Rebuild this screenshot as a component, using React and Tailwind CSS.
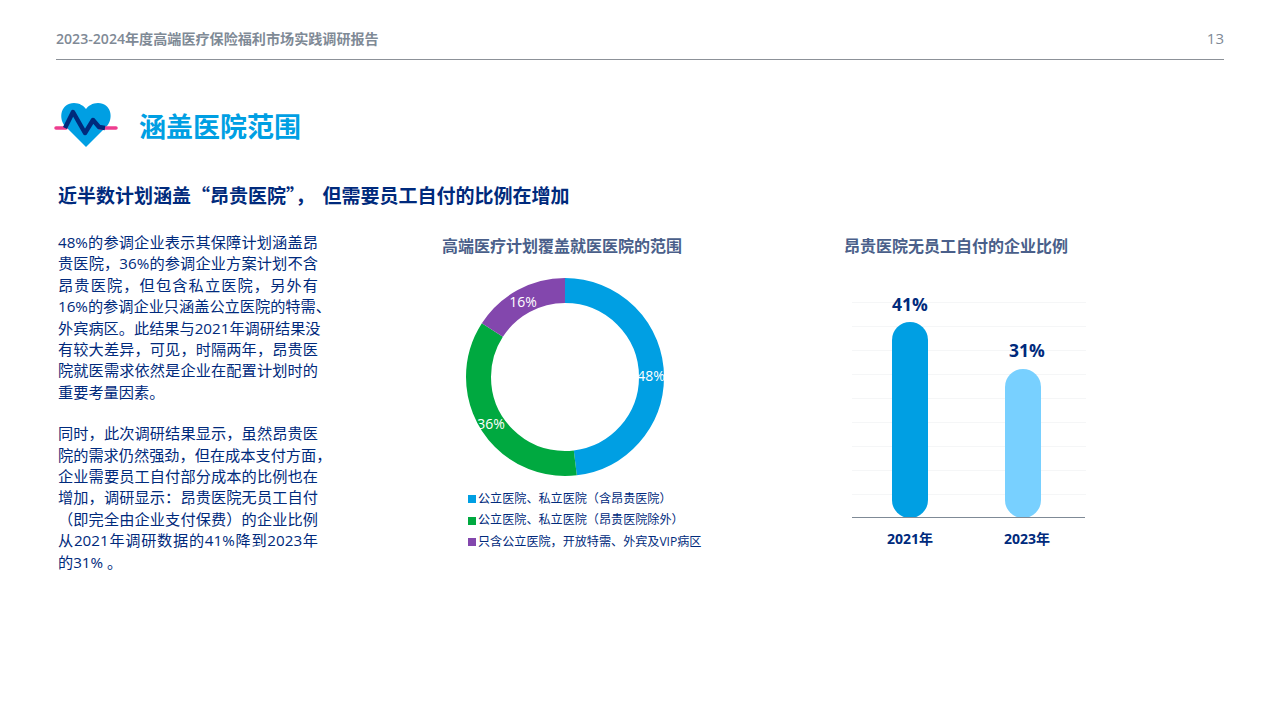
const font = { fontFamily: '"Open Sans", "Noto Sans CJK SC", sans-serif' }

const para1 = [
  '48%的参调企业表示其保障计划涵盖昂',
  '贵医院，36%的参调企业方案计划不含',
  '昂贵医院，但包含私立医院，另外有',
  '16%的参调企业只涵盖公立医院的特需、',
  '外宾病区。此结果与2021年调研结果没',
  '有较大差异，可见，时隔两年，昂贵医',
  '院就医需求依然是企业在配置计划时的',
  '重要考量因素。',
]

const para2 = [
  '同时，此次调研结果显示，虽然昂贵医',
  '院的需求仍然强劲，但在成本支付方面，',
  '企业需要员工自付部分成本的比例也在',
  '增加，调研显示：昂贵医院无员工自付',
  '（即完全由企业支付保费）的企业比例',
  '从2021年调研数据的41%降到2023年',
  '的31% 。',
]

const legend = [
  { color: 'bg-[#009fe3]', label: '公立医院、私立医院（含昂贵医院）' },
  { color: 'bg-[#00a940]', label: '公立医院、私立医院（昂贵医院除外）' },
  { color: 'bg-[#8347ad]', label: '只含公立医院，开放特需、外宾及VIP病区' },
]

function HeartIcon() {
  return (
    <svg width="64" height="48" viewBox="0 0 64 48">
      <path d="M32 45 L11 24 C4 16 7 1 20 1 C25.500 1 30 4 32 7 C34 4 38.500 1 44 1 C57 1 60 16 53 24 Z" fill="#009fe3" />
      <path d="M2 26 H12 M46 26 H62" stroke="#ee3d8f" strokeWidth="3.500" strokeLinecap="round" fill="none" />
      <path d="M11 26 L19 10 L31 31 L39 18 L45 25 L51 26" stroke="#002a7c" strokeWidth="4.500" strokeLinejoin="round" fill="none" />
    </svg>
  )
}

function Donut() {
  const r = 86.5
  const c = 2 * Math.PI * r
  const parts = [
    { pct: 48, color: '#009fe3' },
    { pct: 36, color: '#00a940' },
    { pct: 16, color: '#8347ad' },
  ]
  let offset = 0
  return (
    <svg width="210" height="200" viewBox="0 0 210 200" style={font}>
      {parts.map((p) => {
        const len = (p.pct / 100) * c
        const el = (
          <circle
            key={p.pct}
            cx="105"
            cy="100"
            r={r}
            fill="none"
            stroke={p.color}
            strokeWidth="25"
            strokeDasharray={`${len} ${c - len}`}
            strokeDashoffset={-offset}
            transform="rotate(-90 105 100)"
          />
        )
        offset += len
        return el
      })}
      <text x="191" y="100" textAnchor="middle" dominantBaseline="middle" fontSize="14" fill="#fff">48%</text>
      <text x="31" y="148" textAnchor="middle" dominantBaseline="middle" fontSize="14" fill="#fff">36%</text>
      <text x="63" y="26" textAnchor="middle" dominantBaseline="middle" fontSize="14" fill="#fff">16%</text>
    </svg>
  )
}

function BarChart() {
  const grid = [0, 24, 48, 72, 96, 120, 144, 168, 192]
  return (
    <svg width="236" height="258" viewBox="0 0 236 258" style={font}>
      {grid.map((y) => (
        <line key={y} x1="2" x2="236" y1={y + 10.500} y2={y + 10.500} stroke="#f5f6f7" />
      ))}
      <rect x="42" y="30" width="36" height="196" rx="18" fill="#009fe3" />
      <rect x="155" y="77" width="36" height="149" rx="18" fill="#78d0ff" />
      <line x1="2" x2="235" y1="225.500" y2="225.500" stroke="#7f8a96" />
      <text x="60" y="19" textAnchor="middle" fontSize="17.500" fontWeight="700" fill="#002a7c">41%</text>
      <text x="177" y="65" textAnchor="middle" fontSize="17.500" fontWeight="700" fill="#002a7c">31%</text>
      <text x="60" y="252" textAnchor="middle" fontSize="14" fontWeight="700" fill="#002a7c">2021年</text>
      <text x="177" y="252" textAnchor="middle" fontSize="14" fontWeight="700" fill="#002a7c">2023年</text>
    </svg>
  )
}

function Para({ lines }) {
  return lines.map((l, i) => (
    <div
      key={l}
      className={i === lines.length - 1 ? 'w-[260px] whitespace-nowrap' : 'w-[260px] whitespace-nowrap text-justify [text-align-last:justify]'}
    >
      {l}
    </div>
  ))
}

export default function App() {
  return (
    <div className="w-[1280px] h-[720px] bg-white overflow-hidden px-14 pt-[28px]" style={font}>

      {/* Header */}
      <div className="flex items-center justify-between h-[32px] border-b border-[#8c9198] pb-[10px]">
        <span className="text-[14.100px] font-semibold text-[#7f8a96]">2023-2024年度高端医疗保险福利市场实践调研报告</span>
        <span className="text-[15px] text-[#7f8a96]">13</span>
      </div>

      {/* Title */}
      <div className="flex items-center mt-[41px] -ml-[2px] h-[50px]">
        <HeartIcon />
        <h1 className="ml-[21px] text-[27px] font-bold text-[#009fe3] leading-none">涵盖医院范围</h1>
      </div>

      <h2 className="mt-[29px] ml-[2px] text-[19px] leading-[30px] font-bold text-[#002a7c]">
        近半数计划涵盖<span style={{ fontFamily: '"Noto Sans CJK SC", sans-serif' }}>“</span>昂贵医院<span style={{ fontFamily: '"Noto Sans CJK SC", sans-serif' }}>”</span>， <span className="ml-[3px]">但需要员工自付的比例在增加</span>
      </h2>

      <div className="flex mt-[21px]">
        {/* Text */}
        <div className="w-[290px] ml-[2px] text-[15.200px] leading-[21.400px] text-[#002a7c]">
          <Para lines={para1} />
          <div className="h-[20px]"></div>
          <Para lines={para2} />
        </div>

        {/* Donut */}
        <div className="w-[488px] ml-[14px] flex flex-col">
          <p className="mt-[2px] pl-[80px] whitespace-nowrap text-base leading-[24px] font-bold text-[#4a5f8a]">高端医疗计划覆盖就医医院的范围</p>
          <div className="ml-[98px] mt-[19px]">
            <Donut />
          </div>
          <div className="ml-[106px] mt-[13px] flex flex-col gap-[3.500px]">
            {legend.map((item) => (
              <div key={item.label} className="flex items-center gap-[2px] h-[18px] text-[12.100px] whitespace-nowrap text-[#002a7c]">
                <span className={`w-[8px] h-[8px] ${item.color}`}></span>
                {item.label}
              </div>
            ))}
          </div>
        </div>

        {/* Bars */}
        <div className="flex flex-col">
          <p className="mt-[2px] whitespace-nowrap text-base leading-[24px] font-bold text-[#4a5f8a] -ml-[6px]">昂贵医院无员工自付的企业比例</p>
          <div className="mt-[34px]">
            <BarChart />
          </div>
        </div>
      </div>
    </div>
  )
}
